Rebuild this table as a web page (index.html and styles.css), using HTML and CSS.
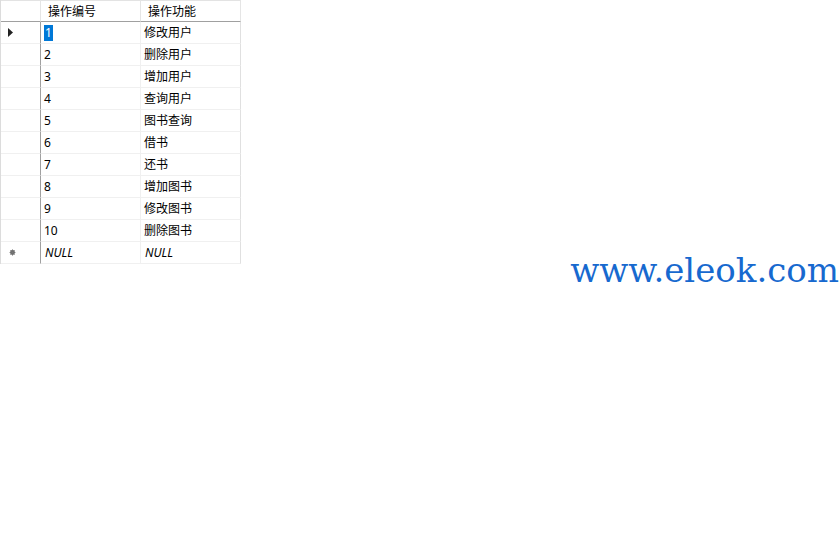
FILE: index.html
```html
<!DOCTYPE html>
<html>
<head>
<meta charset="utf-8">
<link rel="stylesheet" href="styles.css">
</head>
<body>
<div class="grid">
  <div class="cell hdr rh"></div>
  <div class="cell hdr">操作编号</div>
  <div class="cell hdr">操作功能</div>

  <div class="cell rh"><svg class="arrow" width="6" height="9" viewBox="0 0 6 9"><path d="M0 0 L5 4.5 L0 9 Z" fill="#222"/></svg></div>
  <div class="cell"><span class="sel">1</span></div>
  <div class="cell">修改用户</div>

  <div class="cell rh"></div><div class="cell">2</div><div class="cell">删除用户</div>
  <div class="cell rh"></div><div class="cell">3</div><div class="cell">增加用户</div>
  <div class="cell rh"></div><div class="cell">4</div><div class="cell">查询用户</div>
  <div class="cell rh"></div><div class="cell">5</div><div class="cell">图书查询</div>
  <div class="cell rh"></div><div class="cell">6</div><div class="cell">借书</div>
  <div class="cell rh"></div><div class="cell">7</div><div class="cell">还书</div>
  <div class="cell rh"></div><div class="cell">8</div><div class="cell">增加图书</div>
  <div class="cell rh"></div><div class="cell">9</div><div class="cell">修改图书</div>
  <div class="cell rh"></div><div class="cell">10</div><div class="cell">删除图书</div>

  <div class="cell rh"><svg class="star" width="7" height="7" viewBox="0 0 7 7"><circle cx="3.5" cy="3.5" r="2.4" fill="#555"/><path d="M3.5 0.3 V6.7 M0.5 3.5 H6.5 M1.3 1.3 L5.7 5.7 M5.7 1.3 L1.3 5.7" stroke="#777" stroke-width="0.8"/></svg></div>
  <div class="cell null">NULL</div>
  <div class="cell null">NULL</div>
</div>
<div class="mark">www.eleok.com</div>
</body>
</html>
```
FILE: styles.css
```css
html, body {
  margin: 0;
  padding: 0;
  background: #fff;
}
body {
  width: 839px;
  height: 539px;
  position: relative;
  overflow: hidden;
  font-family: "Noto Sans", "Noto Sans CJK SC", sans-serif;
  font-size: 12px;
  color: #000;
}
.grid {
  display: grid;
  grid-template-columns: 40px 100px 100px;
  grid-auto-rows: 22px;
  width: 241px;
  border-left: 1px solid #dcdcdc;
  box-sizing: border-box;
}
.cell {
  box-sizing: border-box;
  border-right: 1px solid #f0f0f0;
  border-bottom: 1px solid #f0f0f0;
  padding-left: 3px;
  display: flex;
  align-items: center;
  line-height: 21px;
  white-space: nowrap;
}
.cell.rh {
  border-right: 1px solid #a0a0a0;
  padding-left: 0;
  justify-content: flex-start;
}
.cell:nth-child(3n) {
  border-right: 1px solid #e0e0e0;
}
.cell.hdr {
  height: 22px;
  border-top: 1px solid #e3e3e3;
  border-bottom: 1px solid #a0a0a0;
  border-right: 1px solid #e5e5e5;
  padding-left: 7px;
  color: #000;
}
.cell.hdr.rh {
  padding-left: 0;
}
.arrow {
  margin-left: 7px;
}
.star {
  margin-left: 8px;
}
.sel {
  background: #0078d7;
  color: #fff;
  padding: 0 1px;
  line-height: 16px;
}
.null {
  font-style: italic;
  padding-left: 4px;
}
.mark {
  position: absolute;
  right: 0;
  top: 251px;
  font-family: "DejaVu Serif", serif;
  font-size: 34px;
  line-height: 38px;
  color: #1769cf;
  white-space: nowrap;
}
```
